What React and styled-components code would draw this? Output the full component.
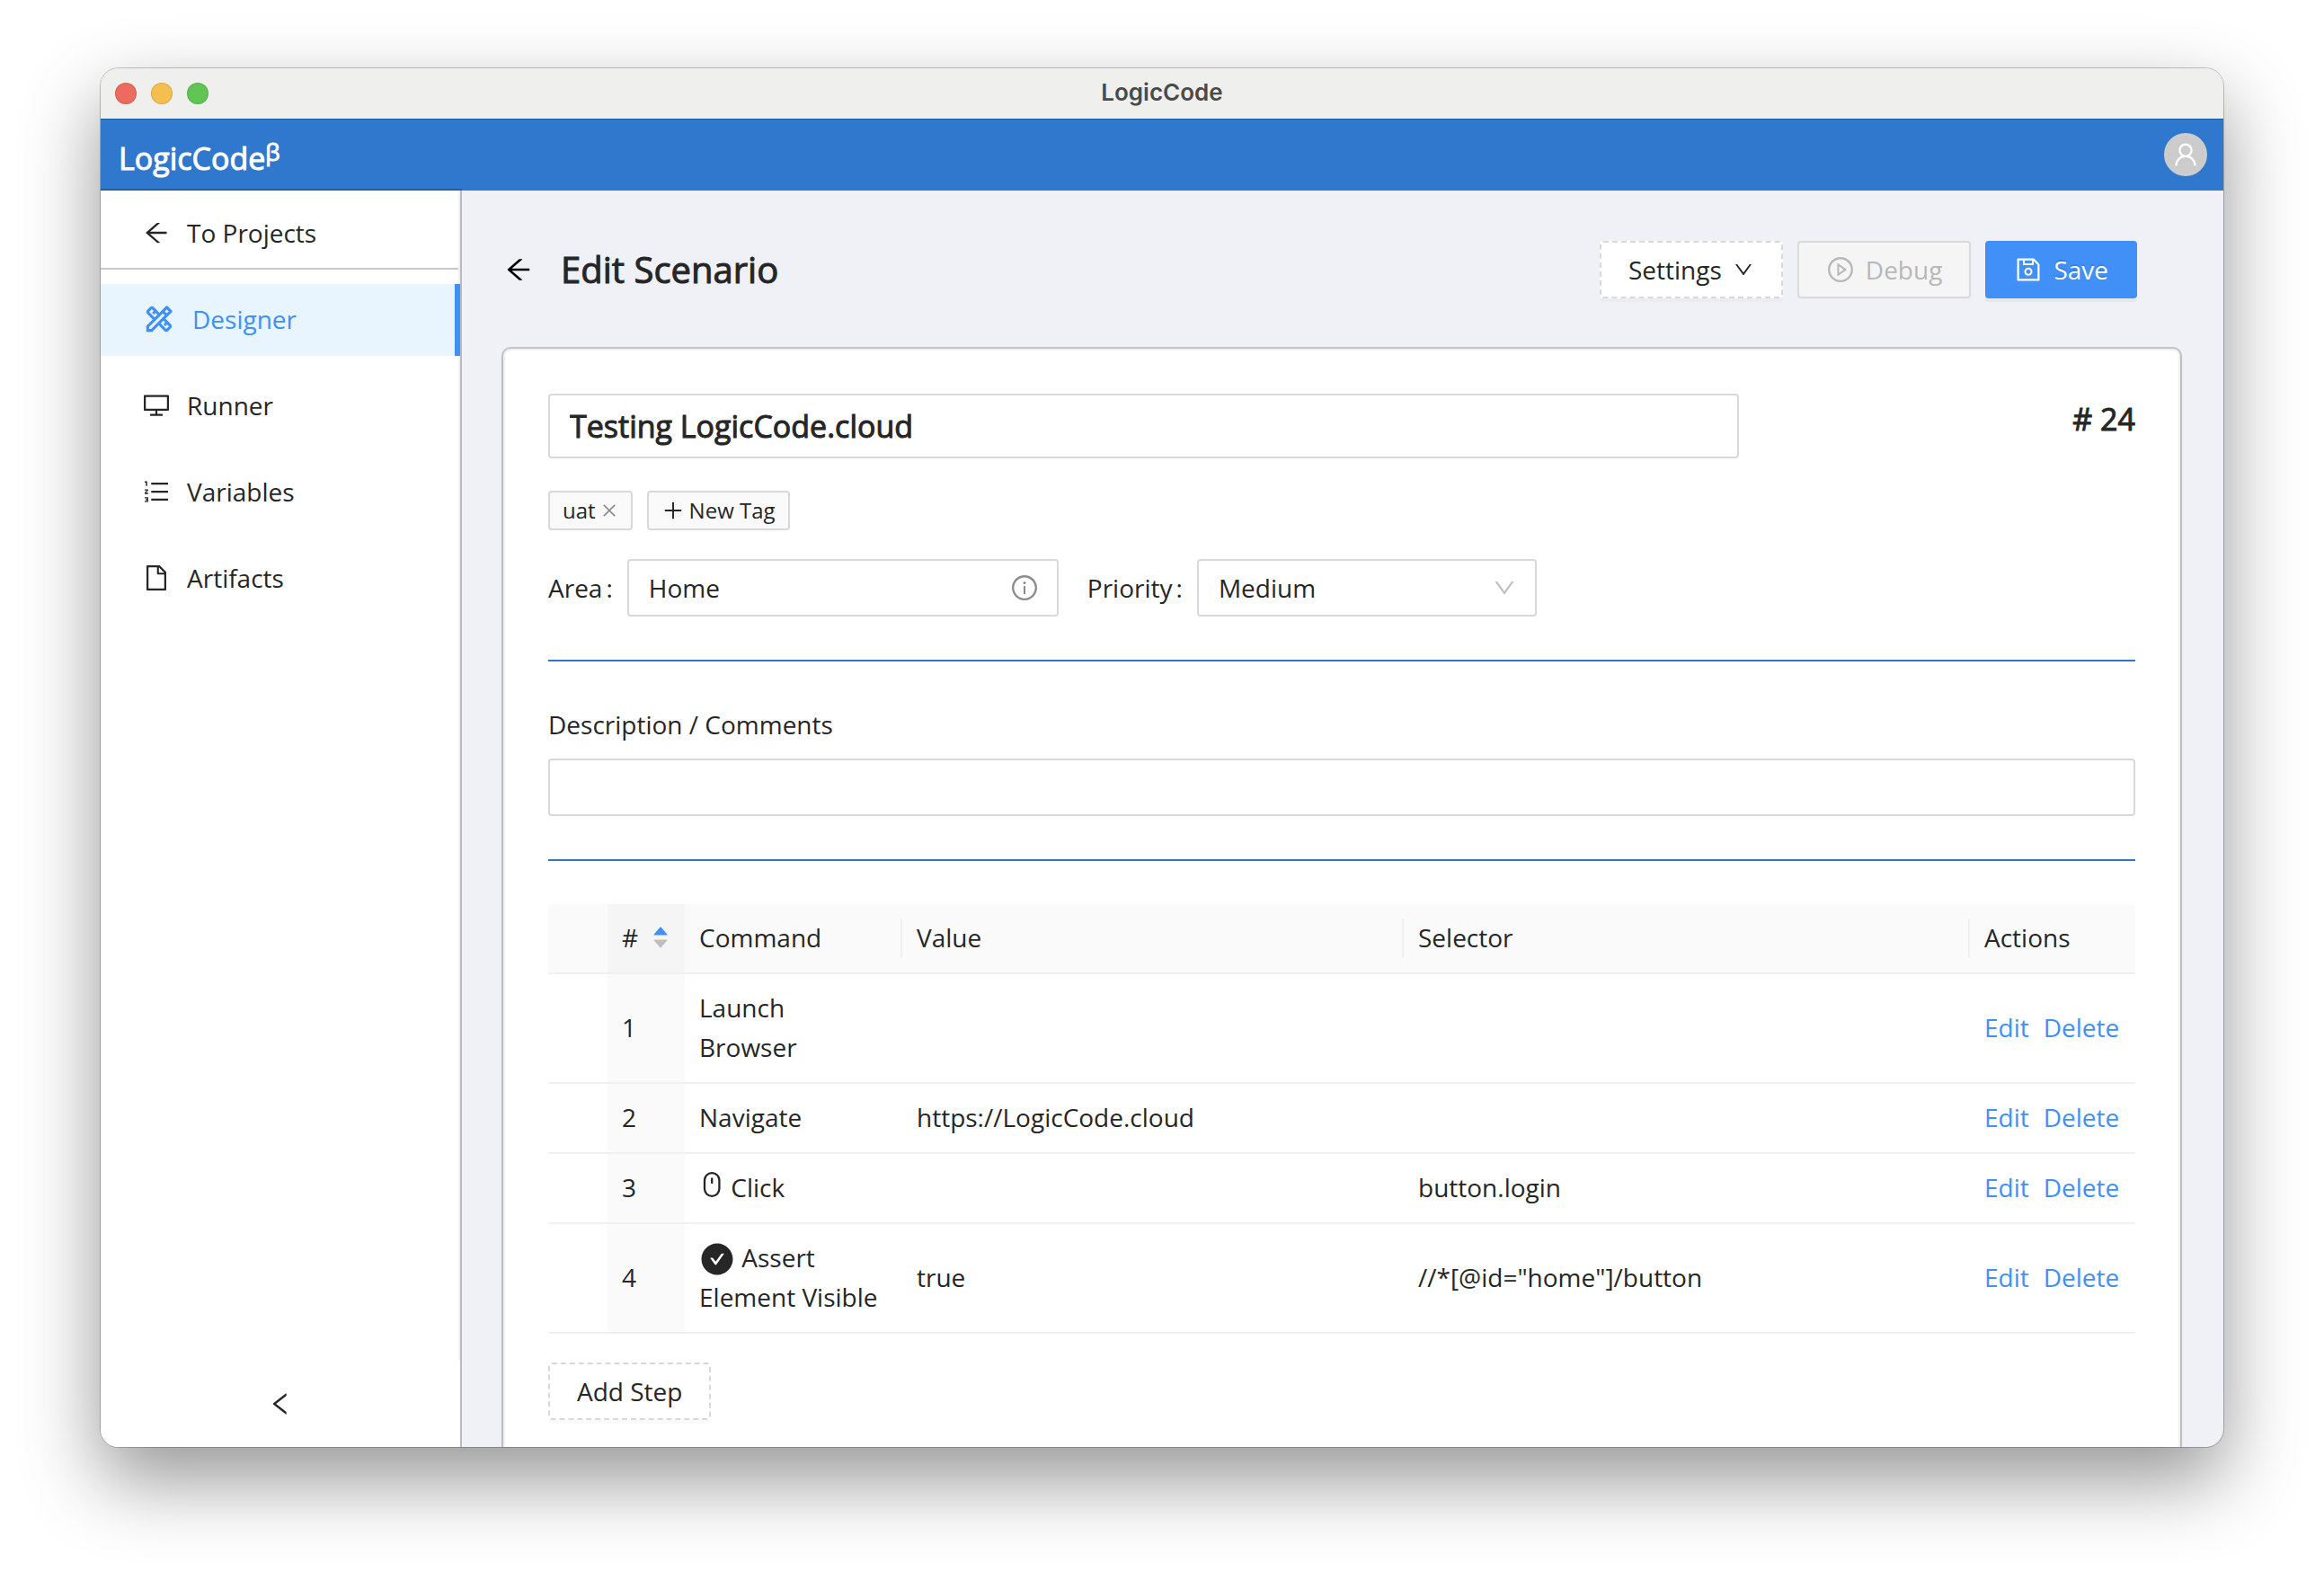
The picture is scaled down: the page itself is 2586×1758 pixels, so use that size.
import React, { useState } from "react";
import styled, { createGlobalStyle } from "styled-components";
import {
    AiOutlineArrowLeft,
    AiOutlineClose,
    AiOutlineDesktop,
    AiOutlineDown,
    AiOutlineFile,
    AiOutlineInfoCircle,
    AiOutlineLeft,
    AiOutlineOrderedList,
    AiOutlinePlayCircle,
    AiOutlinePlus,
    AiOutlineSave,
    AiOutlineUser,
    AiFillCaretDown,
    AiFillCaretUp,
    AiFillCheckCircle,
} from "react-icons/ai";
import { MdOutlineDesignServices } from "react-icons/md";

const GlobalStyle = createGlobalStyle`
    * {
        box-sizing: border-box;
    }

    body {
        margin: 0;
        background-color: #ffffff;
        color: #262626;
        font-family: "Open Sans", "Noto Sans", sans-serif;
        font-size: 28px;
        line-height: 44px;
    }

    button, input, select {
        font: inherit;
        color: inherit;
        margin: 0;
    }

    svg {
        display: block;
        flex-shrink: 0;
    }
`

const Desktop = styled.div`
    display: flex;
    height: 100vh;
    padding: 76px 112px 148px;
`

const Window = styled.div`
    flex: 1;
    min-width: 0;
    display: flex;
    flex-direction: column;
    overflow: hidden;
    border-radius: 20px;
    background-color: #eff1f6;
    box-shadow: 0 0 0 1px rgba(0, 0, 0, 0.22), 0 36px 86px rgba(0, 0, 0, 0.42);
`

const TitleBar = styled.div`
    display: grid;
    grid-template-columns: 1fr auto 1fr;
    align-items: center;
    height: 56px;
    padding: 0 16px;
    background-color: #efefed;
`

const Lights = styled.div`
    display: flex;
    gap: 16px;
`

const Light = styled.span`
    width: 24px;
    height: 24px;
    border-radius: 50%;
    border: 1px solid rgba(0, 0, 0, 0.12);
    background-color: ${(props) => props.$color};
`

const WindowTitle = styled.div`
    padding-bottom: 2px;
    color: #4a4a4a;
    font-family: Inter, "Liberation Sans", sans-serif;
    font-size: 26px;
    font-weight: 600;
`

const Header = styled.header`
    display: flex;
    justify-content: space-between;
    align-items: center;
    height: 80px;
    padding: 0 18px 0 20px;
    background-color: #3078cd;
    color: #ffffff;
    box-shadow: inset 0 1px 0 #1459ab;
`

const Logo = styled.div`
    padding-top: 8px;
    font-size: 34px;
    font-weight: 500;
    -webkit-text-stroke: 1px currentColor;

    sup {
        font-size: 26px;
        line-height: 0;
        vertical-align: 10px;
    }
`

const Avatar = styled.button`
    display: flex;
    justify-content: center;
    align-items: center;
    width: 48px;
    height: 48px;
    padding: 0;
    border: none;
    border-radius: 50%;
    background-color: #cccccc;
    color: #ffffff;
`

const Body = styled.div`
    flex: 1;
    min-height: 0;
    display: flex;
`

const Sidebar = styled.aside`
    position: relative;
    display: flex;
    flex-direction: column;
    flex: 0 0 400px;
    background-color: #ffffff;
    box-shadow: 0 0 0 2px rgba(0, 0, 0, 0.2), 0 0 4px rgba(0, 0, 0, 0.08);
`

const Menu = styled.nav`
    flex: 1;
    display: flex;
    flex-direction: column;
    border-right: 2px solid #f0f0f0;
`

const BackItem = styled.a`
    display: flex;
    align-items: center;
    gap: 18px;
    height: 88px;
    margin-bottom: 16px;
    padding: 8px 46px 0;
    border-bottom: 2px solid #c8c8c8;
    color: #262626;
    text-decoration: none;
`

const MenuItem = styled.a`
    display: flex;
    align-items: center;
    gap: 18px;
    height: 80px;
    margin: 0 -2px 16px 0;
    padding: 0 46px 2px;
    border-right: ${(props) => (props.$active ? "6px solid #4090f7" : "none")};
    background-color: ${(props) => (props.$active ? "#e8f5fe" : "transparent")};
    color: ${(props) => (props.$active ? "#4090f7" : "#262626")};
    text-decoration: none;
`

const CollapseBtn = styled.button`
    display: flex;
    justify-content: center;
    align-items: center;
    height: 96px;
    border: none;
    background-color: #ffffff;
`

const Main = styled.main`
    flex: 1;
    min-width: 0;
    padding: 0 48px;
    overflow: auto;
    scrollbar-width: none;
`

const PageHeader = styled.div`
    display: flex;
    justify-content: space-between;
    align-items: center;
    padding: 56px 48px 56px 0;
`

const PageHeading = styled.div`
    display: flex;
    align-items: center;
    gap: 30px;
`

const BackBtn = styled.button`
    display: flex;
    padding: 0;
    border: none;
    background: none;
    color: #000000;
`

const PageTitle = styled.h1`
    margin: 0;
    font-size: 40px;
    line-height: 64px;
    font-weight: 500;
    -webkit-text-stroke: 1px currentColor;
`

const Actions = styled.div`
    display: flex;
    gap: 16px;
`

const Button = styled.button`
    display: flex;
    align-items: center;
    gap: 12px;
    height: 64px;
    padding: 0 30px;
    border: 2px ${(props) => (props.$dashed ? "dashed" : "solid")} #d9d9d9;
    border-radius: 4px;
    background-color: #ffffff;
    box-shadow: 0 4px 0 rgba(0, 0, 0, 0.02);

    &:disabled {
        background-color: #f5f5f5;
        color: #b8b8b8;
        box-shadow: none;
    }
`

const PrimaryButton = styled(Button)`
    border-color: #4090f7;
    background-color: #4090f7;
    color: #ffffff;
    box-shadow: 0 4px 0 rgba(0, 0, 0, 0.04);
    text-shadow: 0 -2px 0 rgba(0, 0, 0, 0.12);
`

const Card = styled.section`
    padding: 48px;
    border: 2px solid #f0f0f0;
    border-radius: 8px;
    background-color: #ffffff;
    box-shadow: 0 0 0 2px rgba(0, 0, 0, 0.18), 0 2px 4px rgba(0, 0, 0, 0.1);
`

const NameRow = styled.div`
    display: flex;
    justify-content: space-between;
    align-items: flex-start;
    margin-bottom: 36px;
`

const TextInput = styled.input`
    width: 100%;
    height: 64px;
    padding: 0 22px;
    border: 2px solid #d9d9d9;
    border-radius: 4px;
    background-color: #ffffff;
    outline: none;
`

const NameInput = styled(TextInput)`
    width: 75%;
    height: 72px;
    font-size: 34px;
    font-weight: 500;
    -webkit-text-stroke: 1px currentColor;
`

const ScenarioId = styled.div`
    font-size: 34px;
    line-height: 56px;
    font-weight: 500;
    -webkit-text-stroke: 1px currentColor;
`

const Tags = styled.div`
    display: flex;
    gap: 16px;
    margin-bottom: 32px;
`

const Tag = styled.div`
    display: flex;
    align-items: center;
    gap: 5px;
    height: 44px;
    padding: 0 14px;
    border: 2px solid #d9d9d9;
    border-radius: 4px;
    background-color: #fafafa;
    font-size: 24px;
`

const TagClose = styled.button`
    padding: 0;
    border: none;
    background: none;
    color: #8c8c8c;
`

const Fields = styled.div`
    display: flex;
    gap: 32px;
`

const Field = styled.div`
    display: flex;
    align-items: center;
    gap: 16px;
`

const Label = styled.label`
    white-space: nowrap;

    &::after {
        content: ":";
        margin-left: 4px;
    }
`

const Control = styled.div`
    display: grid;
    align-items: center;
    width: ${(props) => props.$width};

    > * {
        grid-area: 1 / 1;
    }

    > svg {
        justify-self: end;
        margin-right: 22px;
        color: ${(props) => props.$iconColor};
        pointer-events: none;
    }
`

const Select = styled.select`
    width: 100%;
    height: 64px;
    padding: 0 22px;
    border: 2px solid #d9d9d9;
    border-radius: 4px;
    background-color: #ffffff;
    appearance: none;
    outline: none;
`

const Divider = styled.hr`
    height: 2px;
    margin: 48px 0;
    border: none;
    background-color: #2f75c9;
`

const BlockLabel = styled.label`
    display: block;
    margin-bottom: 16px;
`

const Table = styled.table`
    width: 100%;
    margin-bottom: 32px;
    border-spacing: 0;
    table-layout: fixed;
    text-align: left;
`

const Th = styled.th`
    position: relative;
    padding: 15px 16px 17px;
    border-bottom: 2px solid #f0f0f0;
    background-color: ${(props) => (props.$sorted ? "#f5f5f5" : "#fafafa")};
    font-weight: 400;

    &:first-child {
        border-top-left-radius: 4px;
    }

    &:last-child {
        border-top-right-radius: 4px;
    }

    &::after {
        content: "";
        display: ${(props) => (props.$split ? "block" : "none")};
        position: absolute;
        top: 16px;
        right: 0;
        width: 2px;
        height: 44px;
        background-color: #f0f0f0;
    }
`

const Td = styled.td`
    padding: 15px 16px 17px;
    border-bottom: 2px solid #f0f0f0;
    background-color: ${(props) => (props.$sorted ? "#fafafa" : "#ffffff")};

    svg {
        display: inline-block;
    }
`

const SortBtn = styled.button`
    display: flex;
    justify-content: space-between;
    align-items: center;
    width: 100%;
    padding: 0;
    border: none;
    background: none;
`

const Carets = styled.span`
    color: #bfbfbf;

    svg:first-child {
        margin-bottom: -8px;
        color: #4090f7;
    }
`

const RowActions = styled.div`
    display: flex;
    gap: 16px;
`

const RowLink = styled.a`
    color: #4090f7;
    text-decoration: none;
`

const MouseSvg = styled.svg`
    vertical-align: baseline;
    fill: none;
    stroke: currentColor;
    stroke-width: 2.3;
    stroke-linecap: round;
`

const CheckIcon = styled(AiFillCheckCircle)`
    vertical-align: -11px;
`

function MouseIcon() {
    return (
        <MouseSvg width="28" height="28" viewBox="0 0 28 28">
            <rect x="6" y="1.2" width="16.4" height="25.6" rx="8" />
            <path d="M14.2 7.5v4.5" />
        </MouseSvg>
    )
}

const menu = [
    { label: "Designer", icon: <MdOutlineDesignServices size={38} />, active: true },
    { label: "Runner", icon: <AiOutlineDesktop size={32} /> },
    { label: "Variables", icon: <AiOutlineOrderedList size={32} /> },
    { label: "Artifacts", icon: <AiOutlineFile size={32} /> },
]

const steps = [
    { id: 1, command: <>Launch<br />Browser</>, value: "", selector: "" },
    { id: 2, command: "Navigate", value: "https://LogicCode.cloud", selector: "" },
    { id: 3, command: <><MouseIcon /> Click</>, value: "", selector: "button.login" },
    { id: 4, command: <><CheckIcon size={40} /> Assert Element Visible</>, value: "true", selector: '//*[@id="home"]/button' },
]

function App() {

    const [name, setName] = useState("Testing LogicCode.cloud");
    const [area, setArea] = useState("Home");
    const [priority, setPriority] = useState("Medium");
    const [description, setDescription] = useState("");

    return (
        <Desktop>
            <GlobalStyle />
            <Window>
                <TitleBar>
                    <Lights>
                        <Light $color="#ec6a5e" />
                        <Light $color="#f5bf4f" />
                        <Light $color="#61c554" />
                    </Lights>
                    <WindowTitle>LogicCode</WindowTitle>
                </TitleBar>
                <Header>
                    <Logo>LogicCode<sup>β</sup></Logo>
                    <Avatar aria-label="Account"><AiOutlineUser size={32} /></Avatar>
                </Header>
                <Body>
                    <Sidebar>
                        <Menu>
                            <BackItem href="#projects"><AiOutlineArrowLeft size={32} />To Projects</BackItem>
                            {menu.map((item) => (
                                <MenuItem key={item.label} href={"#" + item.label.toLowerCase()} $active={item.active}>
                                    {item.icon}
                                    {item.label}
                                </MenuItem>
                            ))}
                        </Menu>
                        <CollapseBtn aria-label="Collapse"><AiOutlineLeft size={32} /></CollapseBtn>
                    </Sidebar>
                    <Main>
                        <PageHeader>
                            <PageHeading>
                                <BackBtn aria-label="Back"><AiOutlineArrowLeft size={34} /></BackBtn>
                                <PageTitle>Edit Scenario</PageTitle>
                            </PageHeading>
                            <Actions>
                                <Button $dashed>Settings<AiOutlineDown size={24} /></Button>
                                <Button disabled><AiOutlinePlayCircle size={32} />Debug</Button>
                                <PrimaryButton><AiOutlineSave size={32} />Save</PrimaryButton>
                            </Actions>
                        </PageHeader>
                        <Card>
                            <NameRow>
                                <NameInput aria-label="Scenario name" value={name} onChange={(e) => setName(e.target.value)} />
                                <ScenarioId># 24</ScenarioId>
                            </NameRow>
                            <Tags>
                                <Tag>uat<TagClose aria-label="Remove uat"><AiOutlineClose size={20} /></TagClose></Tag>
                                <Tag as="button"><AiOutlinePlus size={26} />New Tag</Tag>
                            </Tags>
                            <Fields>
                                <Field>
                                    <Label htmlFor="area">Area</Label>
                                    <Control $width="480px" $iconColor="#8c8c8c">
                                        <TextInput id="area" value={area} onChange={(e) => setArea(e.target.value)} />
                                        <AiOutlineInfoCircle size={32} />
                                    </Control>
                                </Field>
                                <Field>
                                    <Label htmlFor="priority">Priority</Label>
                                    <Control $width="378px" $iconColor="#bfbfbf">
                                        <Select id="priority" value={priority} onChange={(e) => setPriority(e.target.value)}>
                                            <option>Low</option>
                                            <option>Medium</option>
                                            <option>High</option>
                                        </Select>
                                        <AiOutlineDown size={28} />
                                    </Control>
                                </Field>
                            </Fields>
                            <Divider />
                            <BlockLabel htmlFor="description">Description / Comments</BlockLabel>
                            <TextInput id="description" value={description} onChange={(e) => setDescription(e.target.value)} />
                            <Divider />
                            <Table>
                                <colgroup>
                                    <col width="66" />
                                    <col width="86" />
                                    <col width="242" />
                                    <col width="558" />
                                    <col />
                                    <col width="184" />
                                </colgroup>
                                <thead>
                                    <tr>
                                        <Th />
                                        <Th $sorted>
                                            <SortBtn>
                                                #
                                                <Carets>
                                                    <AiFillCaretUp size={22} />
                                                    <AiFillCaretDown size={22} />
                                                </Carets>
                                            </SortBtn>
                                        </Th>
                                        <Th $split>Command</Th>
                                        <Th $split>Value</Th>
                                        <Th $split>Selector</Th>
                                        <Th>Actions</Th>
                                    </tr>
                                </thead>
                                <tbody>
                                    {steps.map((step) => (
                                        <tr key={step.id}>
                                            <Td />
                                            <Td $sorted>{step.id}</Td>
                                            <Td>{step.command}</Td>
                                            <Td>{step.value}</Td>
                                            <Td>{step.selector}</Td>
                                            <Td>
                                                <RowActions>
                                                    <RowLink href="#edit">Edit</RowLink>
                                                    <RowLink href="#delete">Delete</RowLink>
                                                </RowActions>
                                            </Td>
                                        </tr>
                                    ))}
                                </tbody>
                            </Table>
                            <Button $dashed>Add Step</Button>
                        </Card>
                    </Main>
                </Body>
            </Window>
        </Desktop>
    )
}

export default App
